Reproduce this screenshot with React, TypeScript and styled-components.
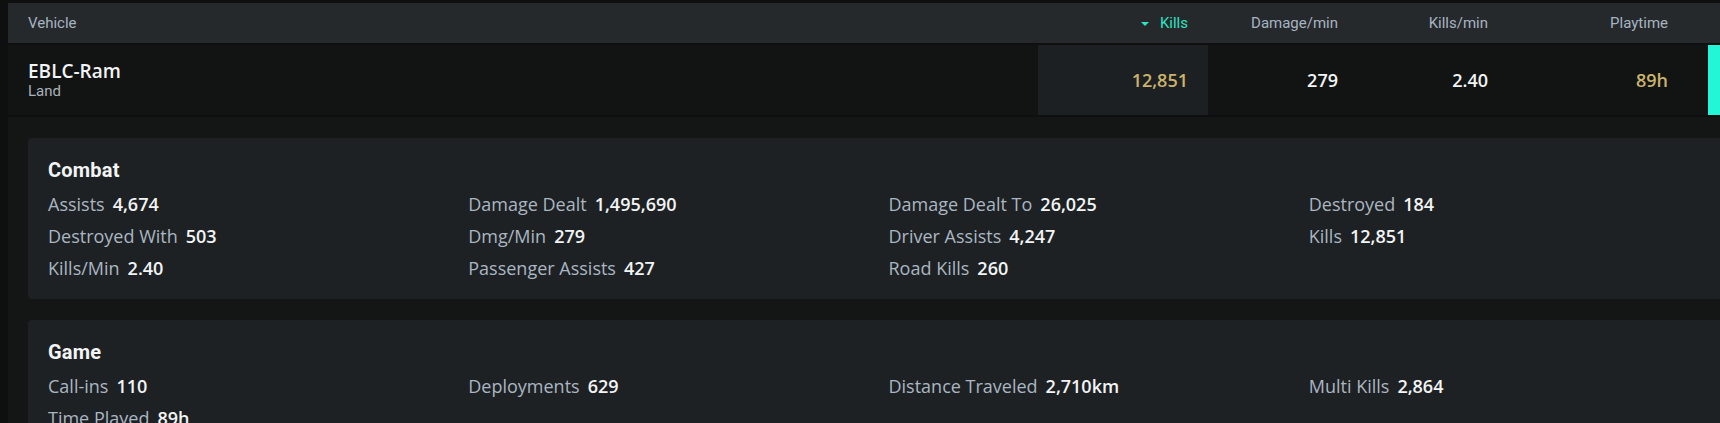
import { FC } from "react";
import styled, { createGlobalStyle } from "styled-components";

const PALETTE = {
    PAGE: "#0e0f0f",
    HEADER: "#26292b",
    ROW: "#121414",
    EXPANDED: "#141616",
    CARD: "#1e2123",
    ACTIVE_CELL: "#1d2022",
    MUTED: "#a6b4c2",
    LABEL: "#aab6c2",
    WHITE: "#f2f4f5",
    GOLD: "#cab36c",
    TEAL: "#2de3c4",
    TEAL_BAR: "#22f6d7",
};

const GlobalStyle = createGlobalStyle`
    html, body {
        margin: 0;
        padding: 0;
        background: ${PALETTE.PAGE};
        overflow: hidden;
    }

    * {
        box-sizing: border-box;
    }
`;

const Page = styled.div`
    padding: 3px 0 0 8px;
    width: 1769px;
`;

const Table = styled.div`
    width: 1761px;
    display: flex;
    flex-direction: column;
    gap: 2px;
`;

const COLUMNS = "1fr 170px 150px 150px 180px 20px 61px";

const HeaderRow = styled.div`
    display: grid;
    grid-template-columns: ${COLUMNS};
    height: 40px;
    background: ${PALETTE.HEADER};
    font-family: Roboto, "Liberation Sans", sans-serif;
    font-size: 15px;
    color: ${PALETTE.MUTED};
`;

const HeaderCell = styled.div<{ $align?: "left" | "right"; $active?: boolean }>`
    display: flex;
    align-items: center;
    justify-content: ${({ $align }) => ($align === "left" ? "flex-start" : "flex-end")};
    padding: ${({ $align }) => ($align === "left" ? "0 0 0 20px" : "0 20px 0 0")};
    color: ${({ $active }) => ($active ? PALETTE.TEAL : PALETTE.MUTED)};
`;

const SortIcon = styled.svg`
    width: 8px;
    height: 4px;
    margin-right: 11px;
    margin-top: 1px;
`;

const DataRow = styled.div`
    display: grid;
    grid-template-columns: ${COLUMNS};
    height: 70px;
    background: ${PALETTE.ROW};
`;

const VehicleCell = styled.div`
    display: flex;
    flex-direction: column;
    justify-content: center;
    padding-left: 20px;
`;

const VehicleName = styled.div`
    font-family: "Open Sans", "Noto Sans", sans-serif;
    font-weight: 600;
    font-size: 19px;
    line-height: 22px;
    color: ${PALETTE.WHITE};
`;

const VehicleType = styled.div`
    font-family: Roboto, "Liberation Sans", sans-serif;
    font-size: 15px;
    line-height: 18px;
    color: #a9b1b9;
`;

const ValueCell = styled.div<{ $active?: boolean; $gold?: boolean }>`
    display: flex;
    align-items: center;
    justify-content: flex-end;
    padding-right: 20px;
    background: ${({ $active }) => ($active ? PALETTE.ACTIVE_CELL : "transparent")};
    font-family: "Open Sans", "Noto Sans", sans-serif;
    font-weight: 600;
    font-size: 18px;
    color: ${({ $gold }) => ($gold ? PALETTE.GOLD : PALETTE.WHITE)};
`;

const Indicator = styled.div`
    background: ${PALETTE.TEAL_BAR};
`;

const Expanded = styled.div`
    background: ${PALETTE.EXPANDED};
    padding: 21px 20px;
    display: flex;
    flex-direction: column;
    gap: 21px;
`;

const Card = styled.section`
    background: ${PALETTE.CARD};
    border-radius: 4px;
    padding: 20px 20px 15px;
`;

const CardTitle = styled.h3`
    margin: 0 0 6px;
    font-family: Roboto, "Liberation Sans", sans-serif;
    font-weight: 700;
    font-size: 20px;
    line-height: 24px;
    color: ${PALETTE.WHITE};
    letter-spacing: 0.2px;
`;

const StatGrid = styled.div`
    display: grid;
    grid-template-columns: repeat(4, 1fr);
    grid-auto-rows: 32px;
`;

const Stat = styled.div`
    display: flex;
    align-items: center;
    gap: 8px;
    font-family: "Open Sans", "Noto Sans", sans-serif;
    font-size: 18px;
    white-space: nowrap;
`;

const StatLabel = styled.span`
    color: ${PALETTE.LABEL};
`;

const StatValue = styled.span`
    color: ${PALETTE.WHITE};
    font-weight: 600;
`;

type StatItem = { label: string; value: string };

const COMBAT: StatItem[] = [
    { label: "Assists", value: "4,674" },
    { label: "Damage Dealt", value: "1,495,690" },
    { label: "Damage Dealt To", value: "26,025" },
    { label: "Destroyed", value: "184" },
    { label: "Destroyed With", value: "503" },
    { label: "Dmg/Min", value: "279" },
    { label: "Driver Assists", value: "4,247" },
    { label: "Kills", value: "12,851" },
    { label: "Kills/Min", value: "2.40" },
    { label: "Passenger Assists", value: "427" },
    { label: "Road Kills", value: "260" },
];

const GAME: StatItem[] = [
    { label: "Call-ins", value: "110" },
    { label: "Deployments", value: "629" },
    { label: "Distance Traveled", value: "2,710km" },
    { label: "Multi Kills", value: "2,864" },
    { label: "Time Played", value: "89h" },
];

const StatCard: FC<{ title: string; items: StatItem[] }> = ({ title, items }) => (
    <Card>
        <CardTitle>{title}</CardTitle>
        <StatGrid>
            {items.map((item) => (
                <Stat key={item.label}>
                    <StatLabel>{item.label}</StatLabel>
                    <StatValue>{item.value}</StatValue>
                </Stat>
            ))}
        </StatGrid>
    </Card>
);

const App: FC = () => (
    <>
        <GlobalStyle />
        <Page>
            <Table>
                <HeaderRow>
                    <HeaderCell $align="left">Vehicle</HeaderCell>
                    <HeaderCell $active>
                        <SortIcon viewBox="0 0 8 4">
                            <path d="M0 0h8L4 4z" fill={PALETTE.TEAL} />
                        </SortIcon>
                        Kills
                    </HeaderCell>
                    <HeaderCell>Damage/min</HeaderCell>
                    <HeaderCell>Kills/min</HeaderCell>
                    <HeaderCell>Playtime</HeaderCell>
                    <div />
                    <div />
                </HeaderRow>

                <DataRow>
                    <VehicleCell>
                        <VehicleName>EBLC-Ram</VehicleName>
                        <VehicleType>Land</VehicleType>
                    </VehicleCell>
                    <ValueCell $active $gold>
                        12,851
                    </ValueCell>
                    <ValueCell>279</ValueCell>
                    <ValueCell>2.40</ValueCell>
                    <ValueCell $gold>89h</ValueCell>
                    <div />
                    <Indicator />
                </DataRow>

                <Expanded>
                    <StatCard title="Combat" items={COMBAT} />
                    <StatCard title="Game" items={GAME} />
                </Expanded>
            </Table>
        </Page>
    </>
);

export default App;
